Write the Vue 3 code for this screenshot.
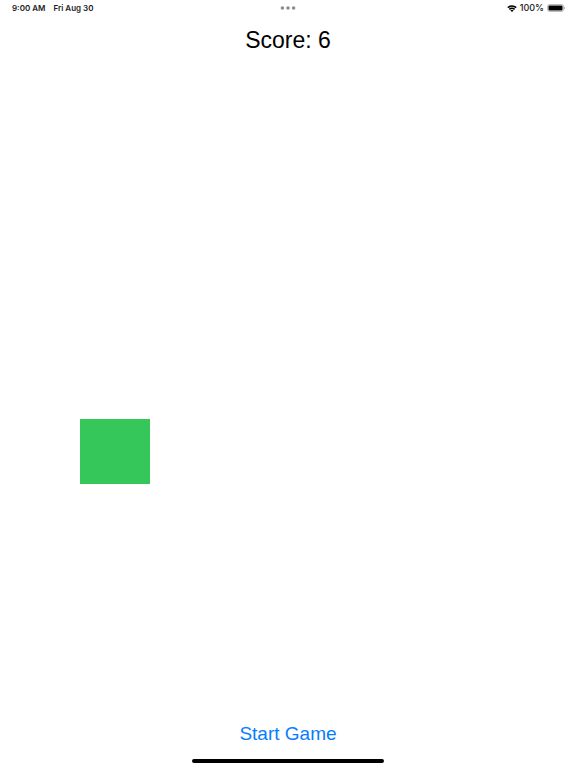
<script setup>
import { ref } from 'vue'

const score = ref(6)
const target = ref({ left: 80, top: 363 })

function startGame() {
  score.value = 0
}

function hit() {
  score.value += 1
}
</script>

<template>
  <div class="screen">
    <header class="status">
      <div class="side">
        <span>9:00 AM</span>
        <span>Fri Aug 30</span>
      </div>
      <svg class="dots" viewBox="0 0 16 4" aria-hidden="true">
        <circle cx="2.4" cy="2" r="1.8" />
        <circle cx="8" cy="2" r="1.8" />
        <circle cx="13.6" cy="2" r="1.8" />
      </svg>
      <div class="side right">
        <svg class="wifi" viewBox="0 0 20 14" aria-hidden="true">
          <path d="M1.5 5.2a12.2 12.2 0 0 1 17 0" />
          <path d="M4.8 8.8a7.4 7.4 0 0 1 10.4 0" />
          <path class="core" d="M10 14 6.8 11a4.6 4.6 0 0 1 6.4 0Z" />
        </svg>
        <span class="percent">100%</span>
        <svg class="battery" viewBox="0 0 36 16" aria-hidden="true">
          <rect class="shell" x="1" y="1" width="32" height="14" rx="4" />
          <rect x="3" y="3" width="28" height="10" rx="2" />
          <path class="cap" d="M34 5.5c2.5.8 2.5 4.2 0 5Z" />
        </svg>
      </div>
    </header>
    <h1 class="score">Score: {{ score }}</h1>
    <main class="field">
      <button
        class="target"
        type="button"
        aria-label="Target"
        :style="{ left: target.left + 'px', top: target.top + 'px' }"
        @click="hit"
      ></button>
    </main>
    <footer class="bottom">
      <button class="start" type="button" @click="startGame">Start Game</button>
      <div class="home"></div>
    </footer>
  </div>
</template>

<style>
body {
  margin: 0;
  background: #fff;
}
</style>

<style scoped>
.screen {
  display: flex;
  flex-direction: column;
  min-height: 100vh;
  background: #fff;
  color: #000;
  font-family: "Liberation Sans", Arial, sans-serif;
}
.status {
  display: grid;
  grid-template-columns: 1fr auto 1fr;
  align-items: center;
  height: 16px;
  padding: 0 11px;
  font-family: Inter, sans-serif;
  font-size: 8px;
  font-weight: 600;
  line-height: 16px;
  color: #222;
}
.side {
  display: flex;
  align-items: center;
  gap: 8px;
  padding-left: 1px;
  white-space: nowrap;
}
.right {
  justify-content: flex-end;
  gap: 3px;
}
.percent {
  font-size: 9px;
  font-weight: 500;
}
.dots {
  width: 16px;
  height: 4px;
  fill: #8c8c8c;
}
.wifi {
  width: 10px;
  height: 7px;
  fill: none;
  stroke: #000;
  stroke-width: 3;
}
.wifi .core {
  fill: #000;
  stroke: none;
}
.battery {
  width: 18px;
  height: 8px;
}
.battery .shell {
  fill: none;
  stroke: #aaa;
  stroke-width: 1.6;
}
.battery .cap {
  fill: #999;
}
.score {
  margin: 8px 0 0;
  font-size: 23px;
  font-weight: 400;
  line-height: 32px;
  text-align: center;
}
.field {
  position: relative;
  flex: 1;
}
.target {
  position: absolute;
  width: 70px;
  height: 65px;
  padding: 0;
  border: 0;
  background: #35c759;
}
.bottom {
  display: flex;
  flex-direction: column;
  align-items: center;
  gap: 11px;
  padding-bottom: 5px;
}
.start {
  padding: 0;
  border: 0;
  background: none;
  color: #087cff;
  font: inherit;
  font-size: 19px;
  line-height: 28px;
}
.home {
  width: 33.333%;
  height: 4px;
  border-radius: 2px;
  background: #000;
}
</style>
